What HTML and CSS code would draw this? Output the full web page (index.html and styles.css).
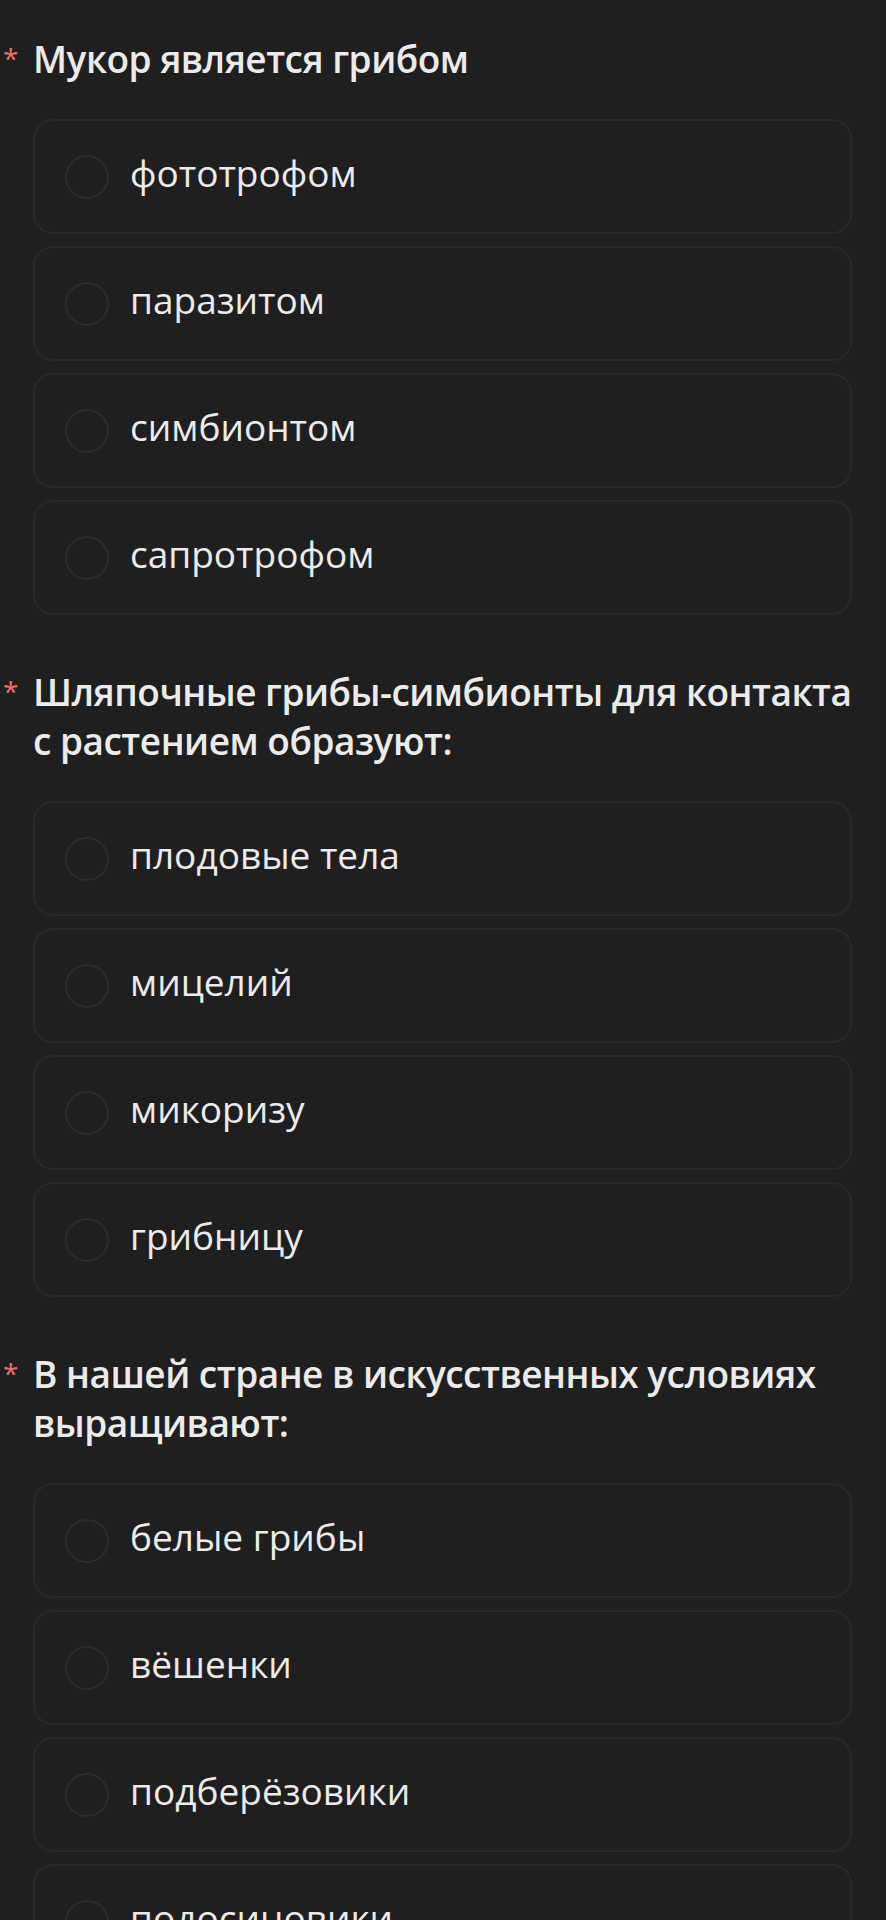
FILE: index.html
```html
<!DOCTYPE html>
<html lang="ru">
<head>
<meta charset="utf-8">
<title>Грибы</title>
<link rel="stylesheet" href="styles.css">
</head>
<body>
<main class="form">
  <section class="question">
    <h2 class="q-title"><span class="req">*</span><span class="q-text">Мукор является грибом</span></h2>
    <div class="options">
      <label class="option"><span class="radio"></span><span class="opt-text">фототрофом</span></label>
      <label class="option"><span class="radio"></span><span class="opt-text">паразитом</span></label>
      <label class="option"><span class="radio"></span><span class="opt-text">симбионтом</span></label>
      <label class="option"><span class="radio"></span><span class="opt-text">сапротрофом</span></label>
    </div>
  </section>
  <section class="question">
    <h2 class="q-title"><span class="req">*</span><span class="q-text">Шляпочные грибы-симбионты для контакта с растением образуют:</span></h2>
    <div class="options">
      <label class="option"><span class="radio"></span><span class="opt-text">плодовые тела</span></label>
      <label class="option"><span class="radio"></span><span class="opt-text">мицелий</span></label>
      <label class="option"><span class="radio"></span><span class="opt-text">микоризу</span></label>
      <label class="option"><span class="radio"></span><span class="opt-text">грибницу</span></label>
    </div>
  </section>
  <section class="question">
    <h2 class="q-title"><span class="req">*</span><span class="q-text">В нашей стране в искусственных условиях выращивают:</span></h2>
    <div class="options">
      <label class="option"><span class="radio"></span><span class="opt-text">белые грибы</span></label>
      <label class="option"><span class="radio"></span><span class="opt-text">вёшенки</span></label>
      <label class="option"><span class="radio"></span><span class="opt-text">подберёзовики</span></label>
      <label class="option"><span class="radio"></span><span class="opt-text">подосиновики</span></label>
    </div>
  </section>
</main>
</body>
</html>
```

FILE: styles.css
```css
html, body {
  margin: 0;
  padding: 0;
  background: #1f1f1f;
}
body {
  font-family: "Open Sans", "Noto Sans", sans-serif;
  color: #ebebeb;
}
.form {
  padding: 34px 34px 0 0;
  display: flex;
  flex-direction: column;
  gap: 52px;
}
.q-title {
  margin: 0 0 36px 0;
  display: flex;
  align-items: flex-start;
  font-size: 37px;
  line-height: 49px;
  font-weight: 600;
  letter-spacing: -0.5px;
  color: #ebebeb;
}
.req {
  flex: none;
  width: 33px;
  padding-left: 3px;
  box-sizing: border-box;
  font-size: 28px;
  line-height: 49px;
  letter-spacing: 0;
  color: #f26b6b;
  font-weight: 400;
}
.q-text {
  flex: 1;
}
.options {
  margin-left: 33px;
  display: flex;
  flex-direction: column;
  gap: 12px;
}
.option {
  box-sizing: border-box;
  height: 115px;
  border: 2px solid #282828;
  border-radius: 20px;
  display: flex;
  align-items: center;
  padding-left: 30px;
}
.radio {
  flex: none;
  box-sizing: border-box;
  width: 44px;
  height: 44px;
  border: 2px solid #2c2c2c;
  border-radius: 50%;
}
.opt-text {
  margin-left: 21px;
  font-size: 37px;
  line-height: 46px;
  padding-bottom: 8px;
  color: #ebebeb;
}
```
